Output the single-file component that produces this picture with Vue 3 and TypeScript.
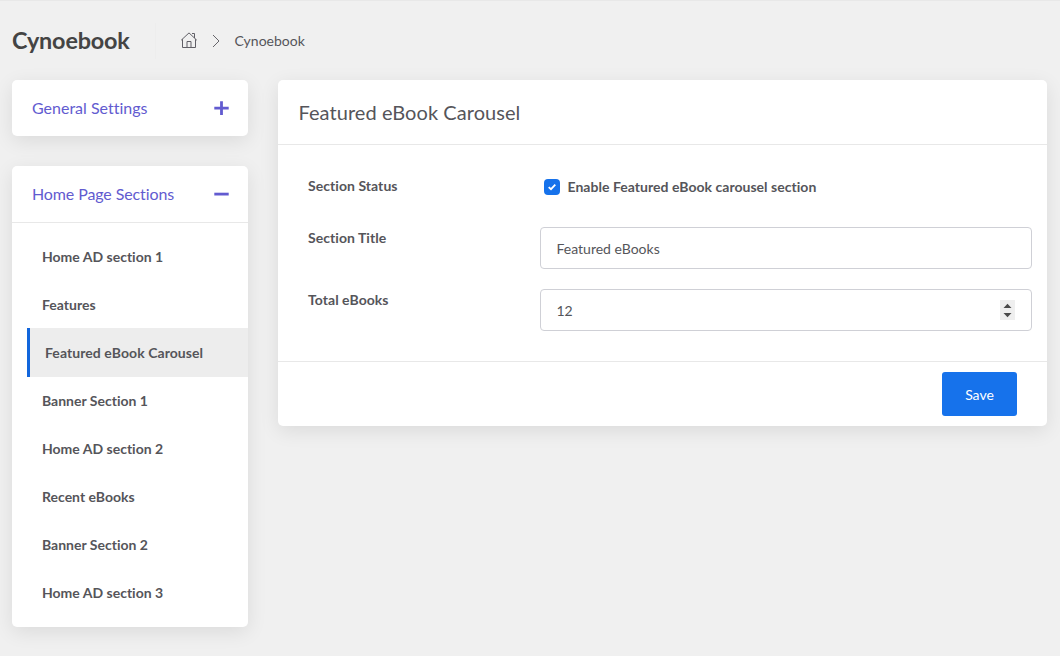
<script setup lang="ts">
import { ref } from 'vue'

const sections: string[] = [
  'Home AD section 1',
  'Features',
  'Featured eBook Carousel',
  'Banner Section 1',
  'Home AD section 2',
  'Recent eBooks',
  'Banner Section 2',
  'Home AD section 3',
]
const active = ref('Featured eBook Carousel')
const enabled = ref(true)
const title = ref('Featured eBooks')
const total = ref('12')
</script>

<template>
  <div class="page">
    <header class="topbar">
      <h1>Cynoebook</h1>
      <nav class="crumbs">
        <svg class="home" width="18" height="18" viewBox="0 0 18 18" fill="none" stroke="#605f66">
          <path d="M1.2 9.2 9 1.9l7.8 7.3M2.5 8.2v8.3h13V8.2M7 16.5v-6h4v6M12 2.5h2.5V7" />
        </svg>
        <svg class="chevron" width="8" height="14" viewBox="0 0 8 14" fill="none" stroke="#66656a">
          <path d="M1 1 7 7 1 13" />
        </svg>
        <span>Cynoebook</span>
      </nav>
    </header>

    <div class="content">
      <aside>
        <section class="card">
          <div class="group">
            <span>General Settings</span>
            <svg width="15" height="15" viewBox="0 0 15 15" fill="#625bd0"><path d="M.3 5.7h5.8V.2h2.8v5.5h5.8v2.8H8.9V14H6.1V8.500H.3z" /></svg>
          </div>
        </section>
        <section class="card">
          <div class="group open">
            <span>Home Page Sections</span>
            <svg width="15" height="15" viewBox="0 0 15 15" fill="#625bd0"><path d="M.3 5.700h14.400v2.800H.3z" /></svg>
          </div>
          <ul>
            <li
              v-for="name in sections"
              :key="name"
              :class="{ active: name === active }"
              @click="active = name"
            >{{ name }}</li>
          </ul>
        </section>
      </aside>

      <main class="card">
        <h2>{{ active }}</h2>
        <form @submit.prevent>
          <div class="row status">
            <span class="label">Section Status</span>
            <label class="check">
              <input v-model="enabled" type="checkbox" />
              <span class="box">
                <svg v-if="enabled" width="8" height="8" viewBox="0 0 8 8" fill="none" stroke="#fff" stroke-width="1.8"><path d="M.7 4.1 3 6.2 7.3 1.7" /></svg>
              </span>
              Enable Featured eBook carousel section
            </label>
          </div>
          <div class="row field">
            <label class="label" for="title">Section Title</label>
            <input id="title" v-model="title" class="input" type="text" />
          </div>
          <div class="row field">
            <label class="label" for="total">Total eBooks</label>
            <div class="number">
              <input id="total" v-model="total" class="input" type="text" />
              <svg class="spin" width="15" height="20" viewBox="0 0 15 20">
                <path fill="#efefef" d="M0 0h15v20H0z" />
                <path fill="#4b4b4b" d="m7.5 3.800 4 4.200H3.500zM3.500 13h8l-4 4.200z" />
              </svg>
            </div>
          </div>
          <footer><button type="submit">Save</button></footer>
        </form>
      </main>
    </div>
  </div>
</template>

<style>
body {
  margin: 0;
  background: #f0f0f0;
}
</style>

<style scoped>
* {
  box-sizing: border-box;
}
.page {
  height: 656px;
  overflow: hidden;
  background: #f0f0f0;
  border-top: 1px solid #e8e8e8;
  color: #55555a;
  font: 14px/20px Lato, "Open Sans", sans-serif;
  font-variant-ligatures: none;
}
.topbar {
  height: 79px;
  padding: 0 12px;
  display: flex;
  align-items: center;
}
h1 {
  margin: 0;
  width: 144px;
  height: 36px;
  border-right: 1px solid #ededed;
  font-size: 23.4px;
  line-height: 35px;
  font-weight: 700;
  letter-spacing: -0.17px;
  color: #444;
}
.crumbs {
  margin-left: 24px;
  display: flex;
  align-items: center;
}
.home {
  margin-top: -1px;
}
.chevron {
  margin: 1px 14.5px 0 14px;
}
.content {
  display: flex;
  align-items: flex-start;
  gap: 30px;
  padding: 0 13px 0 12px;
}
aside {
  width: 236px;
  display: flex;
  flex-direction: column;
  gap: 30px;
}
.card {
  background: #fff;
  border-radius: 5px;
  box-shadow: 0 5px 20px rgba(0, 0, 0, 0.09);
}
.group {
  height: 56px;
  padding: 0 19px 0 20px;
  display: flex;
  align-items: center;
  justify-content: space-between;
  font-size: 16px;
  color: #625bd0;
}
.open {
  height: 57px;
  border-bottom: 1px solid #e8e8e8;
  letter-spacing: -0.11px;
}
ul {
  margin: 0;
  padding: 10px 0 10px 15px;
  list-style: none;
}
li {
  height: 48px;
  padding-left: 15px;
  line-height: 48px;
  font-weight: 700;
}
li.active {
  height: 49px;
  margin: -1px 0 0;
  line-height: 50px;
  letter-spacing: 0.07px;
  border-left: 3px solid #1266dc;
  background: #ededed;
}
main {
  flex: 1;
}
h2 {
  margin: 0;
  height: 65px;
  padding-left: 20.5px;
  border-bottom: 1px solid #e8e8e8;
  font-size: 20px;
  line-height: 64px;
  letter-spacing: 0.06px;
  font-weight: 400;
}
form {
  padding-top: 30px;
}
.row {
  display: flex;
  align-items: flex-start;
  padding: 0 15px 0 30px;
}
.label {
  width: 232px;
  line-height: 22px;
  font-weight: 700;
  letter-spacing: 0.05px;
}
.status {
  height: 52px;
}
.field {
  height: 62px;
}
.check {
  display: flex;
  align-items: center;
  height: 24px;
  padding-left: 4px;
  font-weight: 700;
  letter-spacing: 0.03px;
}
.check input {
  position: absolute;
  opacity: 0;
}
.box {
  width: 16px;
  height: 16px;
  margin-right: 7.5px;
  display: flex;
  align-items: center;
  justify-content: center;
  border-radius: 4px;
  background: #1672eb;
}
.input {
  flex: 1;
  width: 100%;
  height: 42px;
  padding: 0 15.5px;
  border: 1px solid #cfd0d6;
  border-radius: 4px;
  background: #fff;
  color: #55555a;
  font: inherit;
  font-variant-ligatures: none;
  outline: none;
}
.number {
  position: relative;
  flex: 1;
  display: flex;
}
.spin {
  position: absolute;
  right: 17px;
  top: 11px;
}
footer {
  height: 65px;
  margin-top: 10px;
  padding: 10px 30px 0;
  border-top: 1px solid #e8e8e8;
  display: flex;
  justify-content: flex-end;
}
button {
  width: 75px;
  height: 44px;
  padding: 2px 0 0;
  border: 0;
  border-radius: 3px;
  background: #1672eb;
  color: #fff;
  font: inherit;
}
</style>
